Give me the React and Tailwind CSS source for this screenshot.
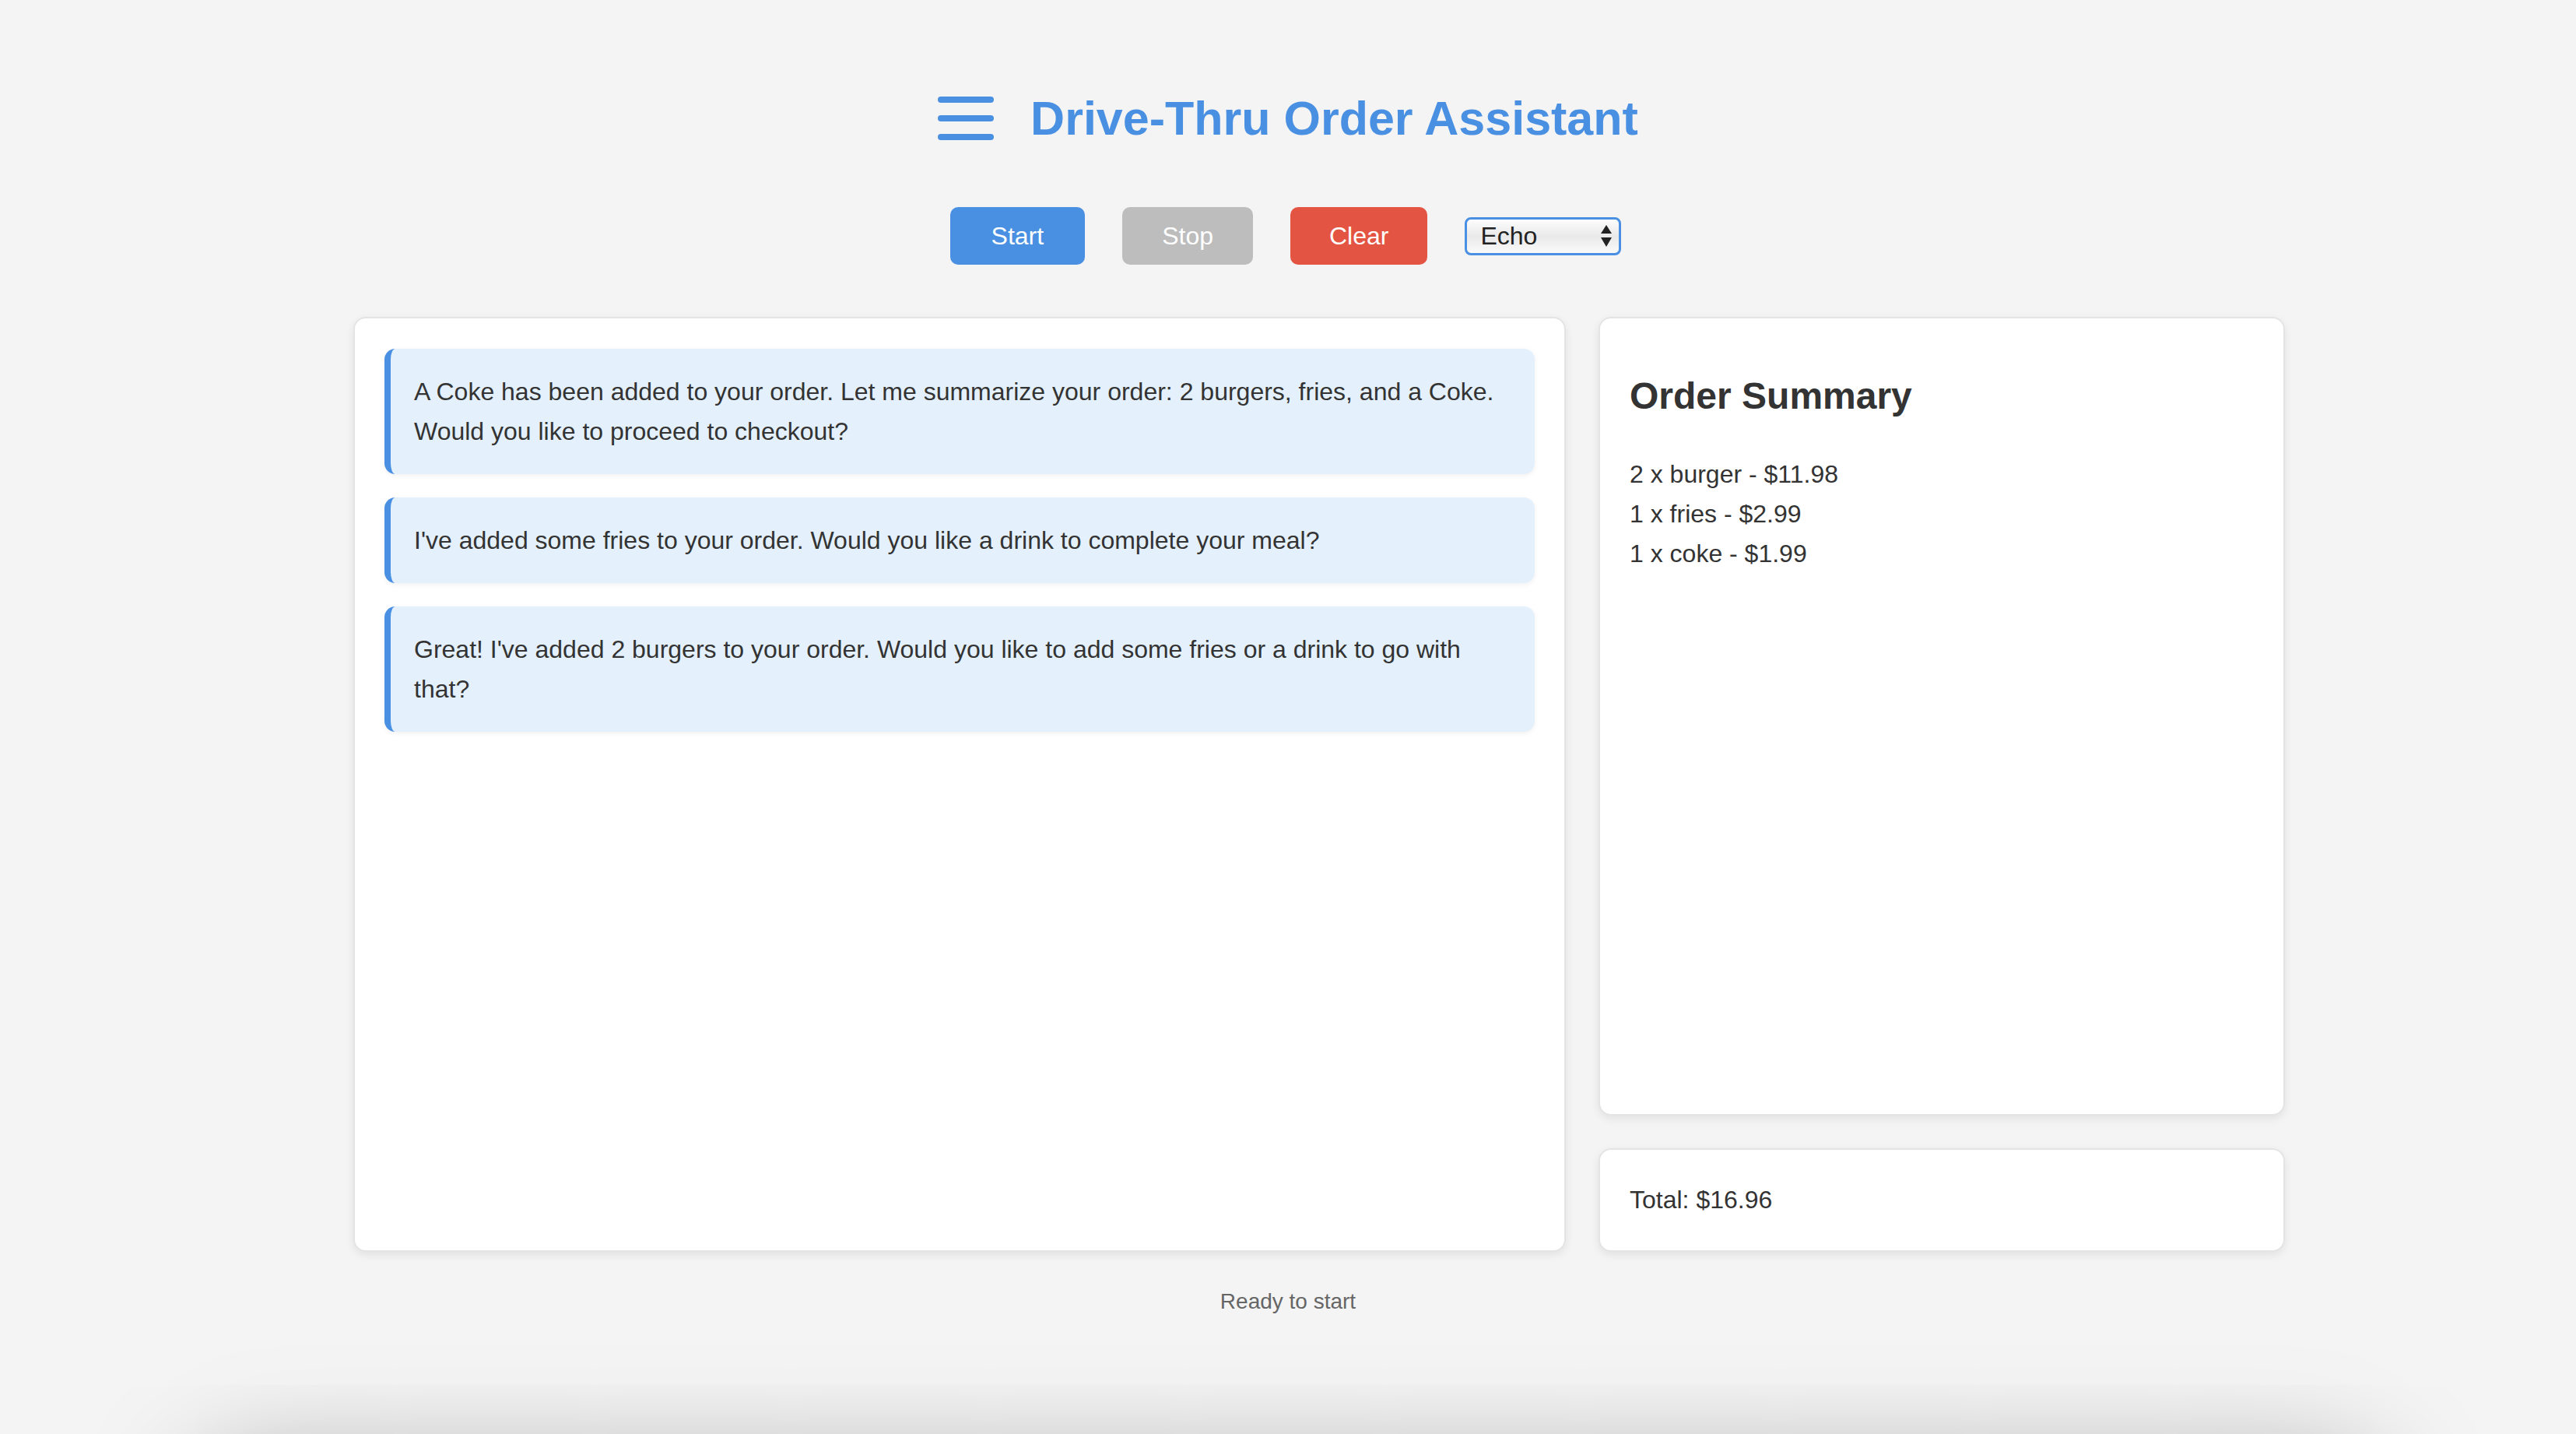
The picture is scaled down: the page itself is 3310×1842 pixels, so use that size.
import React from 'react'

const messages = [
  'A Coke has been added to your order. Let me summarize your order: 2 burgers, fries, and a Coke. Would you like to proceed to checkout?',
  "I've added some fries to your order. Would you like a drink to complete your meal?",
  "Great! I've added 2 burgers to your order. Would you like to add some fries or a drink to go with that?",
]

const items = ['2 x burger - $11.98', '1 x fries - $2.99', '1 x coke - $1.99']

const MenuIcon = () => (
  <svg width="72" height="60" viewBox="0 0 72 60" className="shrink-0">
    <rect x="0" y="2" width="72" height="8" rx="4" fill="#4a90e2" />
    <rect x="0" y="26" width="72" height="8" rx="4" fill="#4a90e2" />
    <rect x="0" y="50" width="72" height="8" rx="4" fill="#4a90e2" />
  </svg>
)

const App = () => {
  return (
    <div className="min-h-screen bg-[#f4f4f4] font-['Liberation_Sans',Arial,sans-serif] text-[#333] overflow-hidden">
      {/* Header */}
      <header className="flex items-center justify-center gap-[47px] pt-[115px]">
        <MenuIcon />
        <h1 className="text-[61px] leading-[74px] font-bold text-[#4a90e2]">Drive-Thru Order Assistant</h1>
      </header>

      {/* Controls */}
      <div className="flex items-center justify-center gap-[48px] mt-[77px] pr-[6px]">
        <button className="bg-[#4a90e2] text-white text-[32px] leading-[37px] px-[53px] pt-[19px] pb-[18px] rounded-[10px]">Start</button>
        <button className="bg-[#bdbdbd] text-white text-[32px] leading-[37px] px-[51px] pt-[19px] pb-[18px] rounded-[10px]">Stop</button>
        <button className="bg-[#e35442] text-white text-[32px] leading-[37px] px-[50px] pt-[19px] pb-[18px] rounded-[10px]">Clear</button>
        <div className="w-[201px] h-[49px] flex items-center justify-between pl-[17px] pr-[8px] border-[3px] border-[#4a90e2] rounded-[8px] bg-gradient-to-b from-[#fdfdfd] via-[#e9e9e9] to-[#fafafa] text-[32px] text-[#222]">
          <span>Echo</span>
          <svg width="16" height="30" viewBox="0 0 16 30">
            <path d="M8 1 L15 12 L1 12 Z" fill="#222" />
            <path d="M1 17 L15 17 L8 29 Z" fill="#222" />
          </svg>
        </div>
      </div>

      {/* Main panels */}
      <div className="flex items-start gap-[42px] ml-[454px] mt-[67px]">
        <div className="w-[1558px] h-[1201px] flex-none bg-white border-2 border-[#e4e4e4] rounded-[16px] shadow-[0_4px_12px_rgba(0,0,0,0.08)] px-[38px] pt-[39px] pb-[38px] flex flex-col gap-[30px]">
          {messages.map((m, i) => (
            <div key={i} className="bg-[#e4f1fc] border-l-[8px] border-[#4a90e2] rounded-[14px] shadow-[0_2px_6px_rgba(0,0,0,0.06)] px-[30px] pt-[30px] pb-[29px] text-[32px] leading-[51px]">
              {m}
            </div>
          ))}
        </div>

        <div className="w-[882px] flex-none flex flex-col gap-[42px]">
          <div className="h-[1026px] bg-white border-2 border-[#e4e4e4] rounded-[16px] shadow-[0_4px_12px_rgba(0,0,0,0.08)] px-[38px] pt-[72px]">
            <h2 className="text-[48px] leading-[55px] font-bold">Order Summary</h2>
            <div className="mt-[48px] text-[32px] leading-[51px]">
              {items.map((it) => (
                <div key={it}>{it}</div>
              ))}
            </div>
          </div>
          <div className="bg-white border-2 border-[#e4e4e4] rounded-[16px] shadow-[0_4px_12px_rgba(0,0,0,0.08)] px-[38px] pt-[39px] pb-[39px] text-[32px] leading-[51px]">
            Total: $16.96
          </div>
        </div>
      </div>

      {/* Status */}
      <p className="mt-[48px] text-center text-[28px] leading-[32px] text-[#666]">Ready to start</p>

      {/* Panel below the fold */}
      <div className="mt-[200px] mx-[260px] h-[400px] bg-[#f4f4f4] rounded-[40px] shadow-[0_0_150px_rgba(0,0,0,0.35)]" />
    </div>
  )
}

export default App
